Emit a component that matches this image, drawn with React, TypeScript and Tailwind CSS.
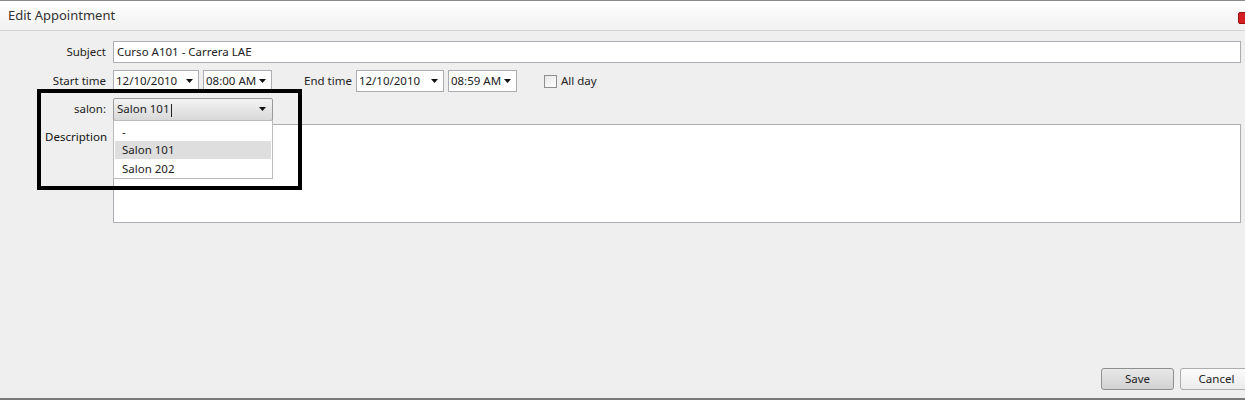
import React from 'react'

const font = { fontFamily: '"Noto Sans", "Open Sans", sans-serif' }

const Caret = () => (
    <svg width="7" height="4" viewBox="0 0 7 4" className="shrink-0">
        <path d="M0 0h7L3.5 4z" fill="#111" />
    </svg>
)

const Picker = ({ value, className }: { value: string; className: string }) => (
    <div className={`h-[22px] flex items-center justify-between bg-white border border-[#abadb3] pl-[2px] pr-[5px] ${className}`}>
        <span>{value}</span>
        <Caret />
    </div>
)

const Label = ({ children }: { children: React.ReactNode }) => (
    <div className="w-[107px] shrink-0 text-right pr-[1px]">{children}</div>
)

const EditAppointment = () => {
    return (
        <div
            className="relative w-[1245px] h-[400px] overflow-hidden bg-[#efefef] flex flex-col text-[11.5px] text-[#222] border-t border-[#8a8a8a] border-b-2 border-b-[#7a7a7a]"
            style={font}
        >
            <div className="h-[30px] shrink-0 flex items-center justify-between pl-[8px] bg-gradient-to-b from-white to-[#f1f1f1] border-b border-[#d6d6d6]">
                <span className="text-[13px] text-[#333]">Edit Appointment</span>
                <div className="w-[12px] h-[12px] mr-[-5px] mt-[4px] rounded-[2px] bg-[#d42020] border border-[#9a1010]" />
            </div>

            <div className="flex flex-col pt-[10px] pr-[4px]">
                <div className="flex items-center gap-[6px] h-[22px]">
                    <Label>Subject</Label>
                    <div className="flex-1 h-[22px] flex items-center bg-white border border-[#abadb3] pl-[3px]">
                        Curso A101 - Carrera LAE
                    </div>
                </div>

                <div className="flex items-center h-[22px] mt-[7px]">
                    <Label>Start time</Label>
                    <Picker value="12/10/2010" className="ml-[6px] w-[86px]" />
                    <Picker value="08:00 AM" className="ml-[4px] w-[69px]" />
                    <span className="ml-[32px]">End time</span>
                    <Picker value="12/10/2010" className="ml-[4px] w-[88px]" />
                    <Picker value="08:59 AM" className="ml-[4px] w-[69px]" />
                    <div className="ml-[27px] w-[13px] h-[13px] border border-[#8f8f8f] bg-gradient-to-br from-[#e6e6e6] to-white" />
                    <span className="ml-[4px]">All day</span>
                </div>

                <div className="flex items-center h-[22px] mt-[6px]">
                    <Label>salon:</Label>
                    <div className="ml-[6px] w-[160px] h-[23px] flex items-center justify-between rounded-[2px] border border-[#9a9a9a] bg-gradient-to-b from-[#f3f3f3] to-[#d9d9d9] pl-[3px] pr-[6px]">
                        <span>Salon 101<span className="inline-block w-px h-[13px] bg-[#222] align-middle ml-px" /></span>
                        <Caret />
                    </div>
                </div>

                <div className="flex items-start mt-[4px]">
                    <div className="w-[107px] shrink-0 text-right pt-[4px] text-[#111]">Description</div>
                    <div className="ml-[6px] flex-1 h-[99px] bg-white border border-[#abadb3]" />
                </div>
            </div>

            <div className="flex-1" />
            <div className="flex justify-end gap-[6px] pb-[8px] mr-[-8px]">
                <button className="w-[73px] h-[22px] rounded-[3px] border border-[#8e8f8f] bg-gradient-to-b from-[#e8e8e8] to-[#d2d2d2] text-[#222]">
                    Save
                </button>
                <button className="w-[73px] h-[22px] rounded-[3px] border border-[#acacac] bg-gradient-to-b from-[#fbfbfb] to-[#ececec] text-[#222]">
                    Cancel
                </button>
            </div>

            <div className="absolute left-[113px] top-[119px] w-[160px] h-[59px] bg-white border border-[#bcbcbc] flex flex-col px-[1px] pt-[1px]">
                <div className="h-[19px] flex items-center pl-[7px]">-</div>
                <div className="h-[19px] flex items-center pl-[7px] bg-[#dedede]">Salon 101</div>
                <div className="h-[19px] flex items-center pl-[7px]">Salon 202</div>
            </div>

            <div className="absolute left-[37px] top-[88px] w-[265px] h-[101px] border-[4px] border-black" />
        </div>
    )
}

export default EditAppointment
